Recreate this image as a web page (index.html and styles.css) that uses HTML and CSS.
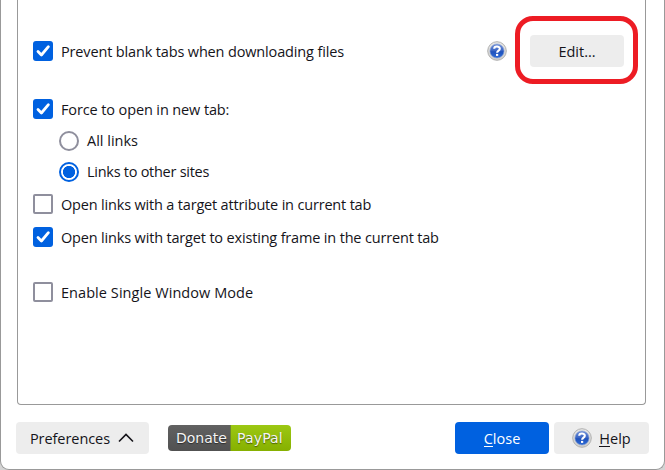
FILE: index.html
```html
<!DOCTYPE html>
<html lang="en">
<head>
<meta charset="utf-8">
<title>Preferences</title>
<link rel="stylesheet" href="styles.css">
</head>
<body>
<svg class="defs" aria-hidden="true">
  <defs>
    <linearGradient id="ball" x1="0" y1="0" x2="0" y2="1">
      <stop offset="0" stop-color="#6f90da"/>
      <stop offset=".48" stop-color="#3a65c4"/>
      <stop offset=".55" stop-color="#1f52bc"/>
      <stop offset="1" stop-color="#2d6ad6"/>
    </linearGradient>
    <linearGradient id="rim" x1="0" y1="0" x2="0" y2="1">
      <stop offset="0" stop-color="#e9e9e7"/>
      <stop offset="1" stop-color="#cfcfcd"/>
    </linearGradient>
    <symbol id="help" viewBox="0 0 20 20">
      <circle cx="10" cy="10" r="9.3" fill="url(#rim)" stroke="#b0b0b0" stroke-width="1"/>
      <circle cx="10" cy="10" r="7.1" fill="url(#ball)" stroke="#8ea4d4" stroke-width=".6"/>
      <path d="M7.2 7.8C7.2 4.8 12.8 4.8 12.8 7.7C12.8 9.6 10.1 9.6 10.1 11.8" fill="none" stroke="#fff" stroke-width="2.1"/>
      <rect x="9" y="12.9" width="2.2" height="2" fill="#fff"/>
    </symbol>
    <symbol id="tick" viewBox="0 0 20 20">
      <path d="M5 10.6L8.4 14L15.4 5.7" fill="none" stroke="#fff" stroke-width="2.8" stroke-linecap="round" stroke-linejoin="round"/>
    </symbol>
  </defs>
</svg>
<main class="window">
  <section class="panel">
    <div class="row row-first">
      <span class="check on"><svg><use href="#tick"/></svg></span>
      <span class="label l1">Prevent blank tabs when downloading files</span>
      <svg class="help-icon push"><use href="#help"/></svg>
      <span class="button edit"><span>Edit...</span></span>
    </div>
    <div class="row row-force">
      <span class="check on"><svg><use href="#tick"/></svg></span>
      <span class="label l2">Force to open in new tab:</span>
    </div>
    <div class="row row-all">
      <span class="radio"></span>
      <span class="label l3">All links</span>
    </div>
    <div class="row row-other">
      <span class="radio selected"></span>
      <span class="label l4">Links to other sites</span>
    </div>
    <div class="row row-attr">
      <span class="check"></span>
      <span class="label l5">Open links with a target attribute in current tab</span>
    </div>
    <div class="row row-frame">
      <span class="check on"><svg><use href="#tick"/></svg></span>
      <span class="label l6">Open links with target to existing frame in the current tab</span>
    </div>
    <div class="row row-single">
      <span class="check"></span>
      <span class="label l7">Enable Single Window Mode</span>
    </div>
  </section>
  <footer class="footer">
    <span class="button prefs"><span>Preferences</span><svg class="chevron" viewBox="0 0 16 10"><path d="M1 8.5L8 1.5L15 8.5" fill="none" stroke="#15141a" stroke-width="1.6"/></svg></span>
    <span class="donate"><span class="donate-left">Donate</span><span class="donate-right">PayPal</span></span>
    <span class="button close"><span><u>C</u>lose</span></span>
    <span class="button help"><svg class="help-icon"><use href="#help"/></svg><span><u>H</u>elp</span></span>
  </footer>
</main>
</body>
</html>
```
FILE: styles.css
```css
* { box-sizing: border-box; }
body {
  margin: 0;
  background: #d4d4d4;
  color: #15141a;
  font: 14.5px/20px "Open Sans", "Noto Sans", sans-serif;
  overflow: hidden;
}
.defs { position: absolute; width: 0; height: 0; }
.window {
  width: 665px;
  height: 470px;
  background: #fff;
  border: 1px solid #999;
  border-top: 0;
  border-radius: 0 0 9px 9px;
}
.panel {
  width: 629px;
  height: 405px;
  margin-left: 16px;
  padding: 41px 21px 0 15px;
  border: 1px solid #999;
  border-top: 0;
  border-radius: 0 0 4px 4px;
}
.row { display: flex; align-items: center; height: 20px; white-space: nowrap; }
.row-force { margin-top: 38px; }
.row-all { margin: 12px 0 0 26px; }
.row-other { margin: 11px 0 0 26px; }
.row-attr { margin-top: 12px; }
.row-frame { margin-top: 13px; }
.row-single { margin-top: 35px; }
.check, .radio { flex: none; width: 20px; height: 20px; border: 2px solid #8f8f9d; border-radius: 2px; background: #fff; }
.check.on { border: 0; border-radius: 3px; background: #0061e0; }
.check svg { display: block; width: 20px; height: 20px; }
.radio { border-radius: 50%; }
.radio.selected { border-color: #0061e0; background: radial-gradient(circle, #0061e0 5.7px, #fff 6.5px); }
.label { margin-left: 8px; padding-top: 1px; }
.l1 { letter-spacing: -.15px; }
.l2 { letter-spacing: -.12px; }
.l3, .l4 { padding-top: 0; }
.l4 { letter-spacing: -.27px; }
.l5 { letter-spacing: -.18px; }
.l6 { letter-spacing: -.17px; }
.l7 { letter-spacing: .06px; }
.help-icon { flex: none; width: 20px; height: 20px; }
.push { margin-left: auto; }
.button {
  display: flex;
  align-items: center;
  justify-content: center;
  height: 32px;
  border-radius: 4px;
  background: #ededed;
}
.button > span { padding-top: 1px; }
.button u { text-decoration: none; box-shadow: inset 0 -1px currentColor; display: inline-block; height: 18px; vertical-align: top; }
.edit { position: relative; width: 94px; margin-left: 23px; }
.edit::after {
  content: "";
  box-sizing: border-box;
  position: absolute;
  left: -15px;
  top: -19px;
  width: 123px;
  height: 68px;
  border: 5px solid #ed1c24;
  border-radius: 18px;
}
.footer { display: flex; align-items: center; height: 32px; margin: 17px 15px 0; }
.prefs { width: 133px; letter-spacing: -.06px; padding-right: 1px; }
.chevron { width: 16px; height: 10px; margin-left: 8px; }
.donate {
  display: flex;
  width: 123px;
  height: 26px;
  margin-left: 19px;
  border-radius: 4px;
  overflow: hidden;
  color: #f4f4f4;
  font: 14px/26px "DejaVu Sans", sans-serif;
  text-shadow: 0 1px 1px rgba(0,0,0,.5);
}
.donate-left { width: 63px; padding-left: 8px; background: linear-gradient(#616161, #515151); border-right: 1px solid #6c8430; }
.donate-right { flex: 1; padding-left: 6px; letter-spacing: .15px; background: linear-gradient(#9cc813, #86b000); }
.close { width: 94px; margin-left: auto; color: #fff; background: #0061e0; }
.help { width: 95px; margin-left: 5px; gap: 7px; }
```
